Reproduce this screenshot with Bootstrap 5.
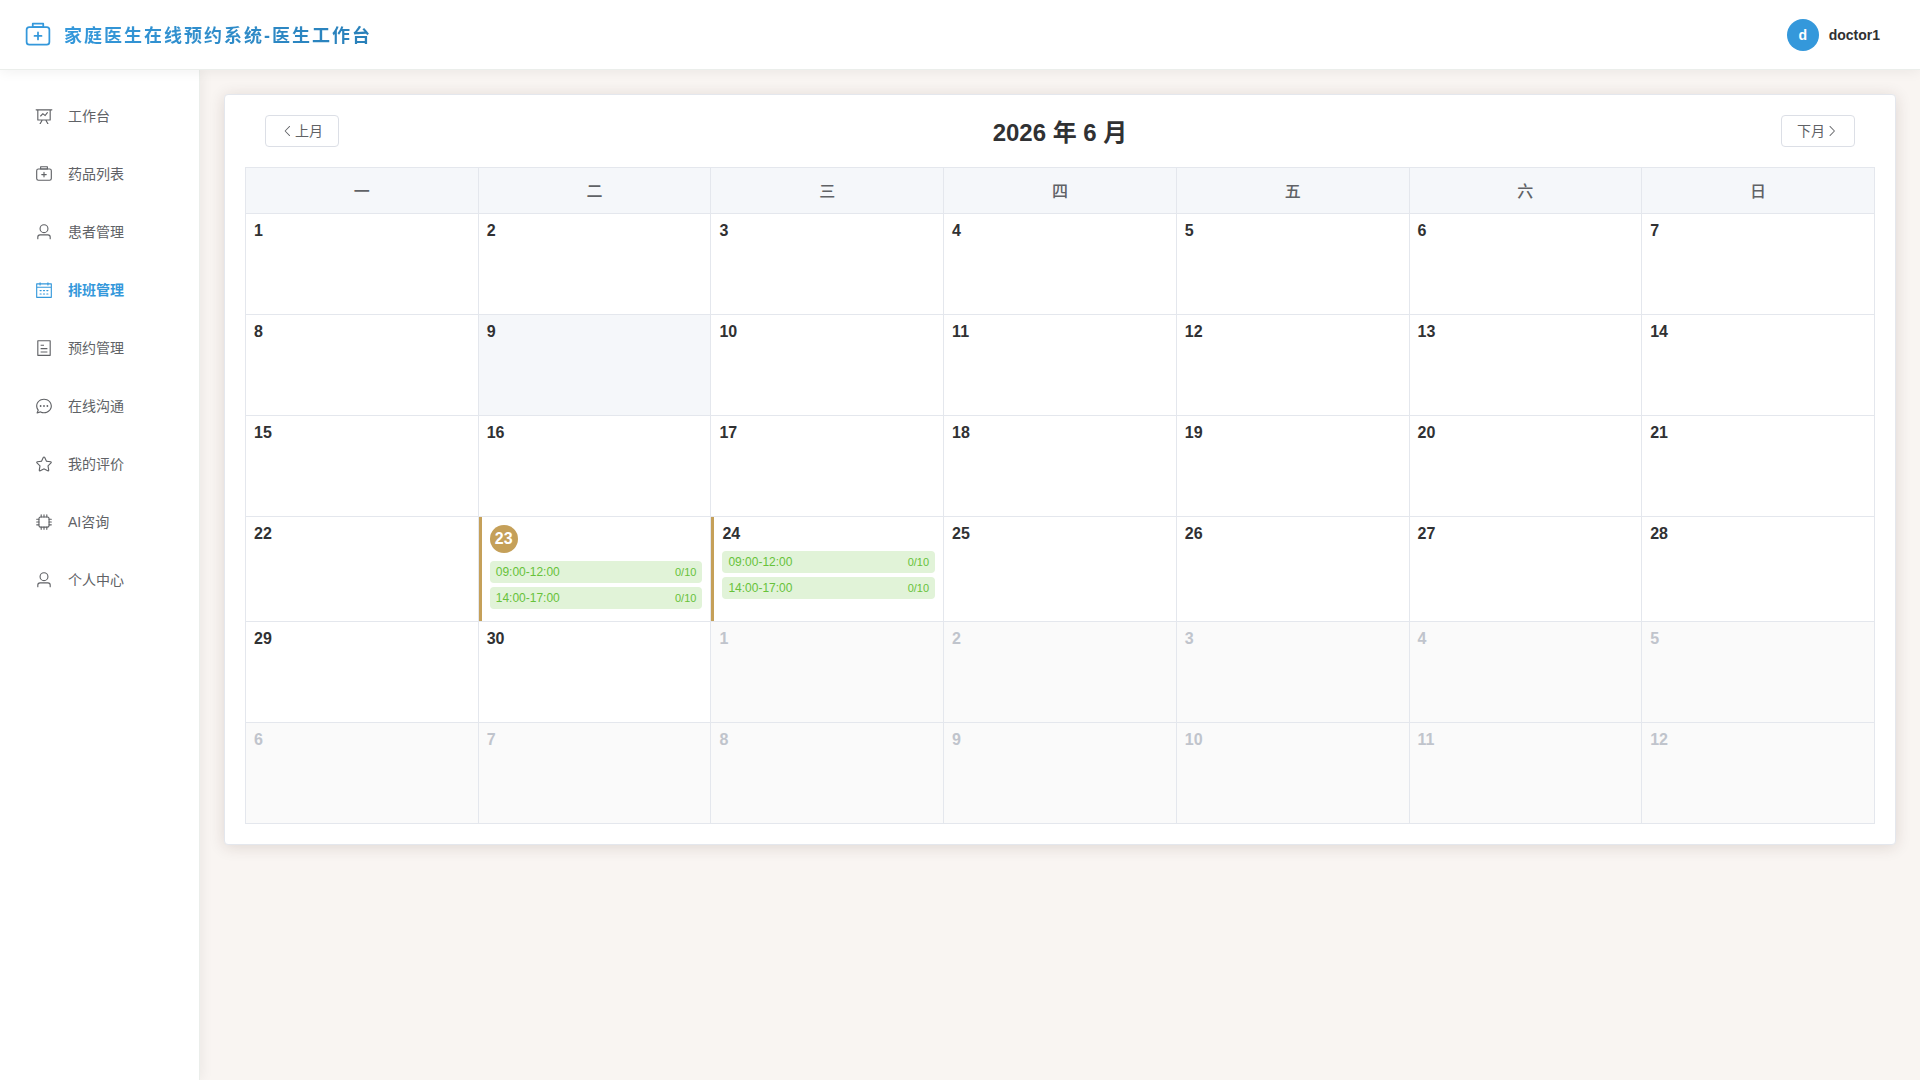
<!DOCTYPE html>
<html lang="zh-CN">
<head>
<meta charset="utf-8">
<meta name="viewport" content="width=device-width, initial-scale=1">
<title>家庭医生在线预约系统-医生工作台</title>
<link href="https://cdn.jsdelivr.net/npm/bootstrap@5.3.0/dist/css/bootstrap.min.css" rel="stylesheet">
<style>
  body { font-family: "Liberation Sans", "Noto Sans CJK SC", sans-serif; font-size: 14px; line-height: 20px; color: #303133; background: #f9f5f2; }
  .ico { fill: currentColor; flex: none; }
  .topbar { height: 70px; padding: 0 40px 0 24px; background: #fff; border-bottom: 1px solid #ebeeeb; box-shadow: 0 2px 12px rgba(0,0,0,.06); z-index: 3; }
  .brand { gap: 12px; color: #3498db; text-decoration: none; }
  .brand-name { padding-top: 2px; font-size: 18px; line-height: 28px; font-weight: 700; letter-spacing: 2px; background: linear-gradient(90deg, #3498db, #2980b9); -webkit-background-clip: text; background-clip: text; color: transparent; }
  .user-menu { gap: 10px; font-weight: 700; color: #303133; text-decoration: none; }
  .avatar { width: 32px; height: 32px; background: #3498db; color: #fff; }
  .sidebar { width: 200px; flex: none; background: #fff; border-right: 1px solid #ebeeeb; box-shadow: 2px 0 12px rgba(0,0,0,.06); padding-top: 21px; z-index: 2; }
  .side-link { height: 50px; margin-bottom: 8px; padding: 0 0 0 35px; gap: 15px; color: #606266; text-decoration: none; }
  .side-link.active { color: #3498db; font-weight: 700; }
  .content-area { padding: 24px; min-width: 0; }
  .panel { background: #fff; border: 1px solid #e4e7ed; border-radius: 4px; padding: 20px; box-shadow: 0 2px 16px rgba(60,30,20,.14); }
  .panel-head { padding: 0 20px; margin-bottom: 20px; }
  .month-title { padding-top: 4px; font-size: 24px; line-height: 28px; font-weight: 700; }
  .btn-month { height: 32px; padding: 0 15px; font-size: 14px; line-height: 20px; color: #606266; background: #fff; border: 1px solid #dcdfe6; border-radius: 4px; }
  .btn-month:hover { color: #3498db; border-color: #3498db; }
  .calendar { width: 100%; table-layout: fixed; border-collapse: collapse; }
  .calendar th, .calendar td { border: 1px solid #e4e7ed; padding: 0; vertical-align: top; }
  /* a definite cell height lets .day fill the row */
  .calendar td { height: 1px; }
  .calendar th { height: 46px; padding-top: 2px; vertical-align: middle; text-align: center; font-size: 16px; font-weight: 500; color: #606266; background: #f5f7fa; }
  .day { min-height: 100px; padding: 8px; }
  .day-num { display: block; font-size: 16px; line-height: 18px; font-weight: 700; margin-bottom: 8px; }
  .is-hover { background: #f5f7fa; }
  .is-other { background: #fafafa; color: #c0c4cc; }
  .has-shift { border-left: 3px solid #c5a059; }
  .is-today .day-num { width: 28px; line-height: 28px; border-radius: 50%; background: #c5a059; color: #fff; text-align: center; }
  .slot { height: 22px; padding: 0 6px; margin-bottom: 4px; border-radius: 4px; background: #e1f3d8; color: #67c23a; font-size: 12px; }
  .slot-count { font-size: 11px; }
</style>
<script src="https://cdn.jsdelivr.net/npm/bootstrap@5.3.0/dist/js/bootstrap.bundle.min.js"></script>
</head>
<body>
<svg class="d-none" aria-hidden="true">
  <symbol id="i-kit" viewBox="0 0 1024 1024"><path d="M192 256a64 64 0 0 0-64 64v448a64 64 0 0 0 64 64h640a64 64 0 0 0 64-64V320a64 64 0 0 0-64-64H192zm0-64h640a128 128 0 0 1 128 128v448a128 128 0 0 1-128 128H192A128 128 0 0 1 64 768V320a128 128 0 0 1 128-128z"/><path d="M544 512h96a32 32 0 0 1 0 64h-96v96a32 32 0 0 1-64 0v-96h-96a32 32 0 0 1 0-64h96v-96a32 32 0 0 1 64 0v96zM352 128v64h320v-64H352zm-32-64h384a32 32 0 0 1 32 32v128a32 32 0 0 1-32 32H320a32 32 0 0 1-32-32V96a32 32 0 0 1 32-32z"/></symbol>
  <symbol id="i-board" viewBox="0 0 1024 1024"><path d="M359.168 768H160a32 32 0 0 1-32-32V192H64a32 32 0 0 1 0-64h896a32 32 0 1 1 0 64h-64v544a32 32 0 0 1-32 32H665.216l110.848 192h-73.856L591.36 768H433.024L322.176 960H248.32l110.848-192zM832 192H192v512h640V192zM342.656 534.656a32 32 0 1 1-45.312-45.312L444.992 341.76l125.44 94.08L679.04 300.032a32 32 0 1 1 49.92 39.936L581.632 524.224 451.008 426.24 342.656 534.592z"/></symbol>
  <symbol id="i-user" viewBox="0 0 1024 1024"><path d="M512 512a192 192 0 1 0 0-384 192 192 0 0 0 0 384zm0 64a256 256 0 1 1 0-512 256 256 0 0 1 0 512zm320 320v-96a96 96 0 0 0-96-96H288a96 96 0 0 0-96 96v96a32 32 0 1 1-64 0v-96a160 160 0 0 1 160-160h448a160 160 0 0 1 160 160v96a32 32 0 1 1-64 0z"/></symbol>
  <symbol id="i-cal" viewBox="0 0 1024 1024"><path d="M128 384v512h768V192H768v32a32 32 0 1 1-64 0v-32H320v32a32 32 0 0 1-64 0v-32H128v128h768v64H128zm192-256h384V96a32 32 0 1 1 64 0v32h160a32 32 0 0 1 32 32v768a32 32 0 0 1-32 32H96a32 32 0 0 1-32-32V160a32 32 0 0 1 32-32h160V96a32 32 0 0 1 64 0v32zm-32 384h64a32 32 0 0 1 0 64h-64a32 32 0 0 1 0-64zm0 192h64a32 32 0 1 1 0 64h-64a32 32 0 1 1 0-64zm192-192h64a32 32 0 0 1 0 64h-64a32 32 0 0 1 0-64zm0 192h64a32 32 0 1 1 0 64h-64a32 32 0 1 1 0-64zm192-192h64a32 32 0 1 1 0 64h-64a32 32 0 1 1 0-64zm0 192h64a32 32 0 1 1 0 64h-64a32 32 0 1 1 0-64z"/></symbol>
  <symbol id="i-doc" viewBox="0 0 1024 1024"><path d="M192 128v768h640V128H192zm-32-64h704a32 32 0 0 1 32 32v832a32 32 0 0 1-32 32H160a32 32 0 0 1-32-32V96a32 32 0 0 1 32-32zm160 448h384v64H320v-64zm0-192h192v64H320v-64zm0 384h384v64H320v-64z"/></symbol>
  <symbol id="i-chat" viewBox="0 0 1024 1024"><path d="m174.72 855.68 135.296-45.12 23.68 11.84C388.096 849.536 448.576 864 512 864c211.84 0 384-166.784 384-352S723.84 160 512 160 128 326.784 128 512c0 69.12 24.96 139.264 70.848 199.232l22.08 28.8-46.272 115.584zm-45.248 82.56A32 32 0 0 1 89.6 896l58.368-145.92C94.72 680.32 64 596.864 64 512 64 299.904 256 96 512 96s448 203.904 448 416-192 416-448 416a461.056 461.056 0 0 1-206.912-48.384l-175.616 58.56z"/><path d="M512 563.2a51.2 51.2 0 1 1 0-102.4 51.2 51.2 0 0 1 0 102.4zm192 0a51.2 51.2 0 1 1 0-102.4 51.2 51.2 0 0 1 0 102.4zm-384 0a51.2 51.2 0 1 1 0-102.4 51.2 51.2 0 0 1 0 102.4z"/></symbol>
  <symbol id="i-star" viewBox="0 0 1024 1024"><path d="m512 747.84 228.16 119.936a6.4 6.4 0 0 0 9.28-6.72l-43.52-254.08 184.512-179.904a6.4 6.4 0 0 0-3.52-10.88l-255.104-37.12L517.76 147.904a6.4 6.4 0 0 0-11.52 0L392.192 379.072l-255.104 37.12a6.4 6.4 0 0 0-3.52 10.88L318.08 606.976l-43.584 254.08a6.4 6.4 0 0 0 9.28 6.72L512 747.84zM313.6 924.48a70.4 70.4 0 0 1-102.144-74.24l37.888-220.928L88.96 472.96A70.4 70.4 0 0 1 128 352.896l221.76-32.256 99.2-200.96a70.4 70.4 0 0 1 126.208 0l99.2 200.96 221.824 32.256a70.4 70.4 0 0 1 39.04 120.064L774.72 629.376l37.888 220.928a70.4 70.4 0 0 1-102.144 74.24L512 820.096l-198.4 104.32z"/></symbol>
  <symbol id="i-cpu" viewBox="0 0 1024 1024"><path d="M320 256a64 64 0 0 0-64 64v384a64 64 0 0 0 64 64h384a64 64 0 0 0 64-64V320a64 64 0 0 0-64-64H320zm0-64h384a128 128 0 0 1 128 128v384a128 128 0 0 1-128 128H320a128 128 0 0 1-128-128V320a128 128 0 0 1 128-128z"/><path fill="none" stroke="currentColor" stroke-width="64" stroke-linecap="round" d="M352 96v128M512 96v128M672 96v128M352 800v128M512 800v128M672 800v128M96 352h128M96 512h128M96 672h128M800 352h128M800 512h128M800 672h128"/></symbol>
  <symbol id="i-left" viewBox="0 0 1024 1024"><path d="M609.408 149.376 277.76 489.6a32 32 0 0 0 0 44.672l331.648 340.352a29.12 29.12 0 0 0 41.728 0 30.592 30.592 0 0 0 0-42.752L339.264 511.936l311.872-319.872a30.592 30.592 0 0 0 0-42.688 29.12 29.12 0 0 0-41.728 0z"/></symbol>
  <symbol id="i-right" viewBox="0 0 1024 1024"><path d="M340.864 149.312a30.592 30.592 0 0 0 0 42.752L652.736 512 340.864 831.872a30.592 30.592 0 0 0 0 42.752 29.12 29.12 0 0 0 41.728 0L714.24 534.336a32 32 0 0 0 0-44.672L382.592 149.376a29.12 29.12 0 0 0-41.728 0z"/></symbol>
</svg>

<div class="d-flex flex-column min-vh-100">
  <header class="topbar d-flex align-items-center justify-content-between position-relative">
    <a href="#" class="brand d-flex align-items-center">
      <svg class="ico" width="28" height="28" aria-hidden="true"><use href="#i-kit"/></svg>
      <span class="brand-name">家庭医生在线预约系统-医生工作台</span>
    </a>
    <a href="#" class="user-menu d-flex align-items-center">
      <span class="avatar rounded-circle d-flex align-items-center justify-content-center">d</span>
      <span>doctor1</span>
    </a>
  </header>

  <div class="d-flex flex-grow-1">
    <nav class="sidebar position-relative" aria-label="主菜单">
      <a href="#" class="side-link d-flex align-items-center"><svg class="ico" width="18" height="18" aria-hidden="true"><use href="#i-board"/></svg><span>工作台</span></a>
      <a href="#" class="side-link d-flex align-items-center"><svg class="ico" width="18" height="18" aria-hidden="true"><use href="#i-kit"/></svg><span>药品列表</span></a>
      <a href="#" class="side-link d-flex align-items-center"><svg class="ico" width="18" height="18" aria-hidden="true"><use href="#i-user"/></svg><span>患者管理</span></a>
      <a href="#" class="side-link active d-flex align-items-center" aria-current="page"><svg class="ico" width="18" height="18" aria-hidden="true"><use href="#i-cal"/></svg><span>排班管理</span></a>
      <a href="#" class="side-link d-flex align-items-center"><svg class="ico" width="18" height="18" aria-hidden="true"><use href="#i-doc"/></svg><span>预约管理</span></a>
      <a href="#" class="side-link d-flex align-items-center"><svg class="ico" width="18" height="18" aria-hidden="true"><use href="#i-chat"/></svg><span>在线沟通</span></a>
      <a href="#" class="side-link d-flex align-items-center"><svg class="ico" width="18" height="18" aria-hidden="true"><use href="#i-star"/></svg><span>我的评价</span></a>
      <a href="#" class="side-link d-flex align-items-center"><svg class="ico" width="18" height="18" aria-hidden="true"><use href="#i-cpu"/></svg><span>AI咨询</span></a>
      <a href="#" class="side-link d-flex align-items-center"><svg class="ico" width="18" height="18" aria-hidden="true"><use href="#i-user"/></svg><span>个人中心</span></a>
    </nav>

    <main class="content-area flex-grow-1">
      <section class="panel">
        <div class="panel-head d-flex align-items-center justify-content-between">
          <button type="button" class="btn btn-month d-flex align-items-center"><svg class="ico" width="14" height="14" aria-hidden="true"><use href="#i-left"/></svg><span>上月</span></button>
          <h1 class="month-title mb-0">2026 年 6 月</h1>
          <button type="button" class="btn btn-month d-flex align-items-center"><span>下月</span><svg class="ico" width="14" height="14" aria-hidden="true"><use href="#i-right"/></svg></button>
        </div>
        <table class="calendar">
          <thead>
            <tr><th scope="col">一</th><th scope="col">二</th><th scope="col">三</th><th scope="col">四</th><th scope="col">五</th><th scope="col">六</th><th scope="col">日</th></tr>
          </thead>
          <tbody>
            <tr>
              <td><div class="day"><span class="day-num">1</span></div></td>
              <td><div class="day"><span class="day-num">2</span></div></td>
              <td><div class="day"><span class="day-num">3</span></div></td>
              <td><div class="day"><span class="day-num">4</span></div></td>
              <td><div class="day"><span class="day-num">5</span></div></td>
              <td><div class="day"><span class="day-num">6</span></div></td>
              <td><div class="day"><span class="day-num">7</span></div></td>
            </tr>
            <tr>
              <td><div class="day"><span class="day-num">8</span></div></td>
              <td class="is-hover"><div class="day"><span class="day-num">9</span></div></td>
              <td><div class="day"><span class="day-num">10</span></div></td>
              <td><div class="day"><span class="day-num">11</span></div></td>
              <td><div class="day"><span class="day-num">12</span></div></td>
              <td><div class="day"><span class="day-num">13</span></div></td>
              <td><div class="day"><span class="day-num">14</span></div></td>
            </tr>
            <tr>
              <td><div class="day"><span class="day-num">15</span></div></td>
              <td><div class="day"><span class="day-num">16</span></div></td>
              <td><div class="day"><span class="day-num">17</span></div></td>
              <td><div class="day"><span class="day-num">18</span></div></td>
              <td><div class="day"><span class="day-num">19</span></div></td>
              <td><div class="day"><span class="day-num">20</span></div></td>
              <td><div class="day"><span class="day-num">21</span></div></td>
            </tr>
            <tr>
              <td><div class="day"><span class="day-num">22</span></div></td>
              <td>
                <div class="day has-shift is-today h-100">
                  <span class="day-num">23</span>
                  <div class="slot d-flex align-items-center justify-content-between"><span>09:00-12:00</span><span class="slot-count">0/10</span></div>
                  <div class="slot d-flex align-items-center justify-content-between"><span>14:00-17:00</span><span class="slot-count">0/10</span></div>
                </div>
              </td>
              <td>
                <div class="day has-shift h-100">
                  <span class="day-num">24</span>
                  <div class="slot d-flex align-items-center justify-content-between"><span>09:00-12:00</span><span class="slot-count">0/10</span></div>
                  <div class="slot d-flex align-items-center justify-content-between"><span>14:00-17:00</span><span class="slot-count">0/10</span></div>
                </div>
              </td>
              <td><div class="day"><span class="day-num">25</span></div></td>
              <td><div class="day"><span class="day-num">26</span></div></td>
              <td><div class="day"><span class="day-num">27</span></div></td>
              <td><div class="day"><span class="day-num">28</span></div></td>
            </tr>
            <tr>
              <td><div class="day"><span class="day-num">29</span></div></td>
              <td><div class="day"><span class="day-num">30</span></div></td>
              <td class="is-other"><div class="day"><span class="day-num">1</span></div></td>
              <td class="is-other"><div class="day"><span class="day-num">2</span></div></td>
              <td class="is-other"><div class="day"><span class="day-num">3</span></div></td>
              <td class="is-other"><div class="day"><span class="day-num">4</span></div></td>
              <td class="is-other"><div class="day"><span class="day-num">5</span></div></td>
            </tr>
            <tr>
              <td class="is-other"><div class="day"><span class="day-num">6</span></div></td>
              <td class="is-other"><div class="day"><span class="day-num">7</span></div></td>
              <td class="is-other"><div class="day"><span class="day-num">8</span></div></td>
              <td class="is-other"><div class="day"><span class="day-num">9</span></div></td>
              <td class="is-other"><div class="day"><span class="day-num">10</span></div></td>
              <td class="is-other"><div class="day"><span class="day-num">11</span></div></td>
              <td class="is-other"><div class="day"><span class="day-num">12</span></div></td>
            </tr>
          </tbody>
        </table>
      </section>
    </main>
  </div>
</div>
</body>
</html>
